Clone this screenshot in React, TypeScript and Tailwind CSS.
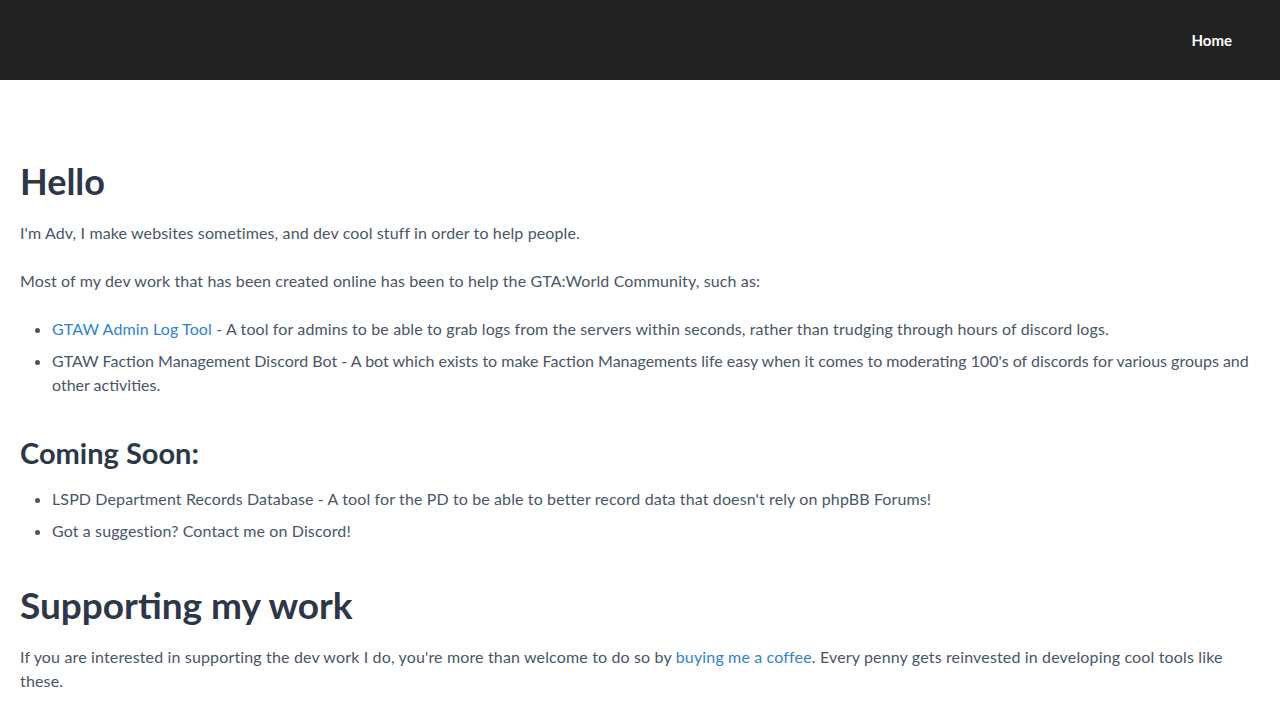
import React from 'react';

const App: React.FC = () => {
  return (
    <div className="min-h-screen w-full bg-white text-[#4a5568] font-['Lato','Liberation_Sans',sans-serif] text-base leading-6 tracking-[0.12px]">
      {/* Navbar */}
      <nav className="h-20 bg-[#222222] flex items-center justify-end pr-12">
        <a href="#" className="text-white font-bold text-[15px] tracking-normal">
          Home
        </a>
      </nav>

      {/* Main Content */}
      <main className="px-5 pt-[77px]">
        <h1 className="text-[36px] leading-[48px] font-bold text-[#2d3748] mb-4 tracking-normal">Hello</h1>
        <p className="mb-6">I'm Adv, I make websites sometimes, and dev cool stuff in order to help people.</p>
        <p className="mb-6">
          Most of my dev work that has been created online has been to help the GTA:World Community, such as:
        </p>
        <ul className="list-disc pl-8 flex flex-col gap-2">
          <li>
            <a href="#" className="text-[#3182ce]">GTAW Admin Log Tool</a> - A tool for admins to be able to grab logs
            from the servers within seconds, rather than trudging through hours of discord logs.
          </li>
          <li className="tracking-normal">
            GTAW Faction Management Discord Bot - A bot which exists to make Faction Managements life easy when it
            comes to moderating 100's of discords for various groups and other activities.
          </li>
        </ul>

        <h2 className="text-[29px] leading-9 font-bold text-[#2d3748] mt-[38px] mb-4 tracking-normal">Coming Soon:</h2>
        <ul className="list-disc pl-8 flex flex-col gap-2">
          <li>
            LSPD Department Records Database - A tool for the PD to be able to better record data that doesn't rely on
            phpBB Forums!
          </li>
          <li>Got a suggestion? Contact me on Discord!</li>
        </ul>

        <h1 className="text-[37px] leading-[48px] font-bold text-[#2d3748] mt-[38px] mb-4 tracking-normal">
          Supporting my work
        </h1>
        <p className="tracking-[0.15px]">
          If you are interested in supporting the dev work I do, you're more than welcome to do so by{' '}
          <a href="#" className="text-[#3182ce]">buying me a coffee</a>. Every penny gets reinvested in developing cool
          tools like these.
        </p>
      </main>
    </div>
  );
};

export default App;
